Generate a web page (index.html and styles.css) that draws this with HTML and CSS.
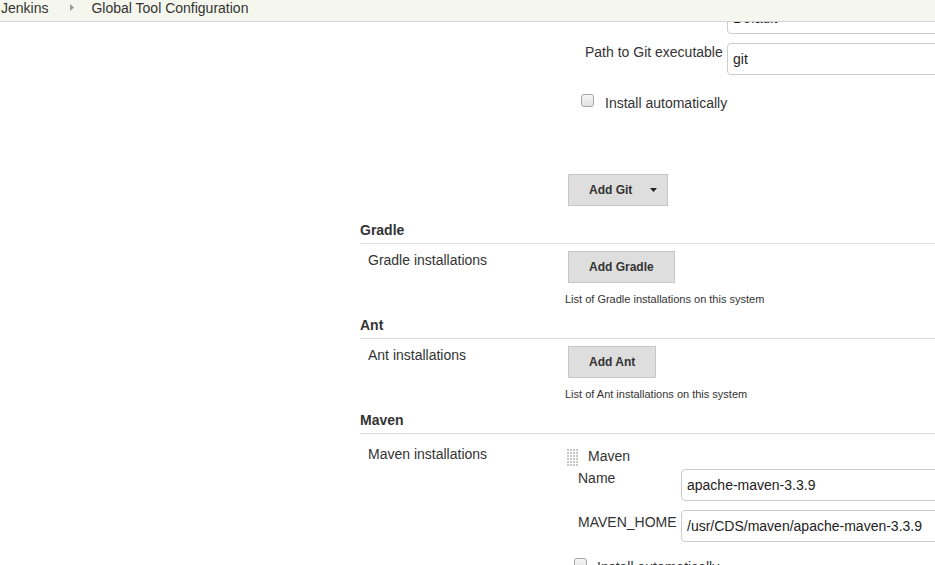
FILE: index.html
```html
<!DOCTYPE html>
<html lang="en">
<head>
<meta charset="utf-8">
<title>Global Tool Configuration [Jenkins]</title>
<link rel="stylesheet" href="styles.css">
</head>
<body>
<header class="breadcrumbs">
  <span class="crumb crumb-first">Jenkins</span>
  <svg class="sep" width="4" height="7" viewBox="0 0 4 7"><polygon points="0,0 4,3.5 0,7" fill="#999"/></svg>
  <span class="crumb">Global Tool Configuration</span>
</header>

<main class="page">
  <div class="git-block">
    <div class="fields fields-git">
      <div class="field-label"></div>
      <input class="text-input" type="text" value="Default">
      <div class="field-label">Path to Git executable</div>
      <input class="text-input" type="text" value="git">
    </div>
    <label class="check check-git"><input type="checkbox"><span>Install automatically</span></label>
    <div class="git-actions">
      <button class="btn btn-menu" type="button">Add Git<svg class="caret" width="7" height="4" viewBox="0 0 7 4"><polygon points="0,0 7,0 3.5,4" fill="#222"/></svg></button>
    </div>
  </div>

  <section class="section section-first">
    <h2 class="section-header">Gradle</h2>
    <div class="setting-row">
      <div class="setting-name">Gradle installations</div>
      <div class="setting-main">
        <button class="btn" type="button">Add Gradle</button>
        <div class="help">List of Gradle installations on this system</div>
      </div>
    </div>
  </section>

  <section class="section">
    <h2 class="section-header">Ant</h2>
    <div class="setting-row">
      <div class="setting-name">Ant installations</div>
      <div class="setting-main">
        <button class="btn" type="button">Add Ant</button>
        <div class="help">List of Ant installations on this system</div>
      </div>
    </div>
  </section>

  <section class="section">
    <h2 class="section-header">Maven</h2>
    <div class="setting-row">
      <div class="setting-name setting-name-list">Maven installations</div>
      <div class="setting-main">
        <div class="repeated-chunk">
          <div class="chunk-header">
            <svg class="grip" width="12" height="17" viewBox="0 0 12 17">
              <g fill="#c6c6c6">
                <rect x="0" y="0" width="2" height="2"/><rect x="3" y="0" width="2" height="2"/><rect x="6" y="0" width="2" height="2"/><rect x="9" y="0" width="2" height="2"/>
                <rect x="0" y="3" width="2" height="2"/><rect x="3" y="3" width="2" height="2"/><rect x="6" y="3" width="2" height="2"/><rect x="9" y="3" width="2" height="2"/>
                <rect x="0" y="6" width="2" height="2"/><rect x="3" y="6" width="2" height="2"/><rect x="6" y="6" width="2" height="2"/><rect x="9" y="6" width="2" height="2"/>
                <rect x="0" y="9" width="2" height="2"/><rect x="3" y="9" width="2" height="2"/><rect x="6" y="9" width="2" height="2"/><rect x="9" y="9" width="2" height="2"/>
                <rect x="0" y="12" width="2" height="2"/><rect x="3" y="12" width="2" height="2"/><rect x="6" y="12" width="2" height="2"/><rect x="9" y="12" width="2" height="2"/>
                <rect x="0" y="15" width="2" height="2"/><rect x="3" y="15" width="2" height="2"/><rect x="6" y="15" width="2" height="2"/><rect x="9" y="15" width="2" height="2"/>
              </g>
            </svg>
            <span class="chunk-title">Maven</span>
          </div>
          <div class="fields fields-maven">
            <div class="field-label">Name</div>
            <input class="text-input" type="text" value="apache-maven-3.3.9">
            <div class="field-label field-label-low">MAVEN_HOME</div>
            <input class="text-input" type="text" value="/usr/CDS/maven/apache-maven-3.3.9">
          </div>
          <label class="check check-maven"><input type="checkbox"><span>Install automatically</span></label>
        </div>
      </div>
    </div>
  </section>
</main>
</body>
</html>
```

FILE: styles.css
```css
html, body {
  margin: 0;
  padding: 0;
  overflow: hidden;
}

body {
  width: 935px;
  height: 565px;
  font-family: "Liberation Sans", Arial, sans-serif;
  font-size: 14px;
  line-height: 17px;
  color: #333;
  background: #fff;
}

/* breadcrumb bar (sticks over scrolled content) */
.breadcrumbs {
  position: fixed;
  top: 0;
  left: 0;
  right: 0;
  height: 21px;
  background: #f5f7ee;
  border-bottom: 1px solid #d2d2d2;
  display: flex;
  align-items: flex-start;
  z-index: 10;
}

.crumb {
  line-height: 17px;
  color: #333;
  white-space: nowrap;
}

.crumb-first {
  margin-left: 1px;
}

.sep {
  display: block;
  margin: 4px 17px 0 22px;
}

/* page body */
.page {
  margin-left: 360px;
  width: 800px;
  padding-top: 2px;
}

.git-block {
  margin-left: 208px;
}

.fields {
  display: grid;
  row-gap: 9px;
}

.fields-git {
  grid-template-columns: 142px 1fr;
  margin-left: 17px;
}

.fields-maven {
  grid-template-columns: 103px 1fr;
  margin-left: 11px;
  margin-top: 3px;
}

.field-label {
  padding-top: 1px;
  white-space: nowrap;
}

.field-label-low {
  padding-top: 4px;
}

.text-input {
  box-sizing: border-box;
  width: 100%;
  height: 32px;
  margin: 0;
  padding: 0 5px;
  border: 1px solid #ccc;
  border-radius: 4px;
  background: #fff;
  font-family: "Liberation Sans", Arial, sans-serif;
  font-size: 14px;
  color: #222;
}

.check {
  display: flex;
  align-items: flex-start;
  gap: 11px;
  white-space: nowrap;
}

.check input {
  appearance: none;
  -webkit-appearance: none;
  box-sizing: border-box;
  width: 13px;
  height: 13px;
  margin: 0;
  border: 1px solid #a6a6a6;
  border-radius: 3px;
  background: linear-gradient(#f6f6f6, #e2e2e2);
}

.check span {
  padding-top: 1px;
}

.check-git {
  margin: 19px 0 0 13px;
}

.check-maven {
  margin: 16px 0 0 7px;
  gap: 10px;
}

.git-actions {
  margin-top: 62px;
}

/* buttons */
.btn {
  box-sizing: border-box;
  display: inline-flex;
  align-items: center;
  height: 32px;
  margin: 0;
  padding: 0 20px;
  border: 1px solid #c6c6c6;
  border-radius: 0;
  background: #dedede;
  font-family: "Liberation Sans", Arial, sans-serif;
  font-size: 12px;
  font-weight: bold;
  color: #333;
}

.btn-menu {
  padding-right: 10px;
}

.caret {
  display: block;
  margin-left: 18px;
}

/* sections */
.section {
  margin-top: 11px;
}

.section-first {
  margin-top: 16px;
}

.section-header {
  margin: 0;
  padding: 0 0 4px;
  font-size: 14px;
  line-height: 17px;
  font-weight: bold;
  color: #333;
  border-bottom: 1px solid #ddd;
}

.setting-row {
  display: grid;
  grid-template-columns: 208px 1fr;
  padding-top: 7px;
}

.setting-name {
  padding: 1px 0 0 8px;
  white-space: nowrap;
}

.setting-name-list {
  padding-top: 5px;
}

.setting-main {
  min-width: 0;
}

.help {
  margin: 10px 0 0 -3px;
  font-size: 11px;
  line-height: 13px;
  color: #333;
}

/* repeated chunk (Maven) */
.repeated-chunk {
  margin-left: -1px;
  padding-top: 7px;
}

.chunk-header {
  display: flex;
  align-items: flex-start;
  gap: 9px;
  height: 18px;
}

.grip {
  display: block;
  margin-top: 1px;
}

.chunk-title {
  line-height: 17px;
}
```
